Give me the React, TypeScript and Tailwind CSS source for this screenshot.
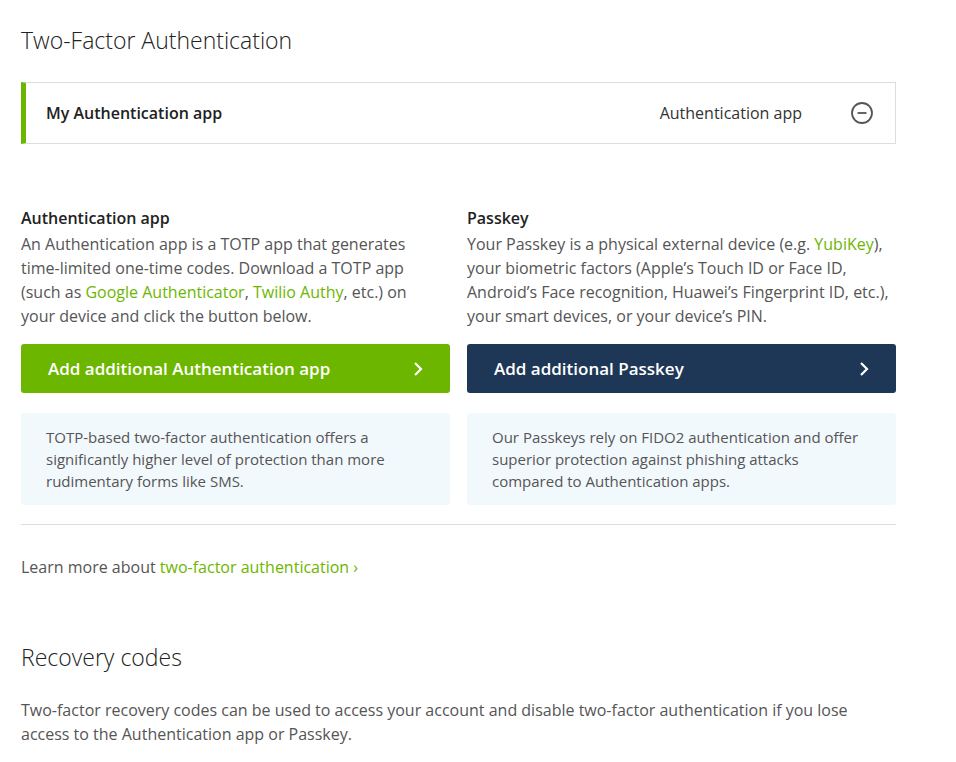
import React from "react";

const G = "text-[#6cb600]";

export default function App() {
  return (
    <div className="bg-white w-[956px] h-[762px] overflow-hidden px-[21px] text-[#333]" style={{ fontFamily: '"Open Sans", sans-serif' }}>
      <div className="w-[875px]">
        <h1 className="text-[23px] font-light leading-[32px] pt-[24px] text-[#222]">Two-Factor Authentication</h1>
        <div className="mt-[26px] h-[62px] flex items-center border border-[#ddd] border-l-[5px] border-l-[#6cb600] pl-[20px] pr-[21px]">
          <div className="font-semibold text-[16px] flex-1 text-[#222]">My Authentication app</div>
          <div className="text-[16px] text-[#333]">Authentication app</div>
          <svg className="ml-[48px]" width="24" height="24" viewBox="0 0 24 24" fill="none" stroke="#555" strokeWidth="1.8"><circle cx="12" cy="12" r="10" /><line x1="7.5" y1="12" x2="16.5" y2="12" /></svg>
        </div>
        <div className="mt-[60px] grid grid-cols-2 gap-[17px]">
          {[
            {
              h: "Authentication app", w: "w-[400px]",
              body: (<>An Authentication app is a TOTP app that generates time-limited one-time codes. Download a TOTP app (such as <span className={G}>Google Authenticator</span>, <span className={G}>Twilio Authy</span>, etc.) on your device and click the button below.</>),
              btn: "Add additional Authentication app", bg: "bg-[#6cb600]",
              info: "TOTP-based two-factor authentication offers a significantly higher level of protection than more rudimentary forms like SMS.",
            },
            {
              h: "Passkey", w: "",
              body: (<>Your Passkey is a physical external device (e.g. <span className={G}>YubiKey</span>), your biometric factors (Apple’s Touch ID or Face ID, Android’s Face recognition, Huawei’s Fingerprint ID, etc.), your smart devices, or your device’s PIN.</>),
              btn: "Add additional Passkey", bg: "bg-[#1e3756]",
              info: "Our Passkeys rely on FIDO2 authentication and offer superior protection against phishing attacks compared to Authentication apps.",
            },
          ].map((c) => (
            <div key={c.h} className="flex flex-col">
              <div className="font-semibold text-[16px] leading-[28px] text-[#222]">{c.h}</div>
              <p className={`text-[16px] leading-[24px] text-[#555] h-[96px] ${c.w}`}>{c.body}</p>
              <div className={`mt-[16px] h-[49px] rounded-[3px] ${c.bg} flex items-center justify-between pl-[27px] pr-[26px] text-white font-semibold text-[17px]`}>
                <span>{c.btn}</span>
                <svg width="12" height="16" viewBox="0 0 12 16" fill="none" stroke="white" strokeWidth="2.2"><path d="M3 2l6 6-6 6" /></svg>
              </div>
              <div className="mt-[20px] h-[92px] bg-[#f2f9fd] rounded-[3px] px-[25px] pt-[13px] text-[15px] leading-[22px] text-[#555]">{c.info}</div>
            </div>
          ))}
        </div>
        <div className="mt-[19px] border-t border-[#ddd]" />
        <p className="mt-[30px] text-[16px] leading-[24px] text-[#555]">Learn more about <span className={G}>two-factor authentication ›</span></p>
        <h2 className="mt-[62px] text-[23px] font-light leading-[32px] text-[#222]">Recovery codes</h2>
        <p className="mt-[25px] text-[16px] leading-[24px] text-[#555] w-[860px]">Two-factor recovery codes can be used to access your account and disable two-factor authentication if you lose access to the Authentication app or Passkey.</p>
      </div>
    </div>
  );
}
